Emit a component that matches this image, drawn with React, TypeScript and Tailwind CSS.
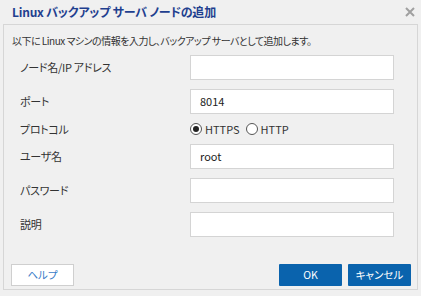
import React from 'react';

const jp = "font-['Noto_Sans_CJK_JP','Noto_Sans',sans-serif] [font-feature-settings:'palt']";

const Field: React.FC<{ label: string; value?: string }> = ({ label, value }) => (
  <div className="flex items-center h-[25px]">
    <div className="w-[170px] text-[11px] tracking-[-0.3px] text-[#333]">{label}</div>
    <div className="w-[204px] h-[25px] bg-white border border-[#d4d4d4] flex items-center px-[9px] text-[11px] text-[#222]">
      {value}
    </div>
  </div>
);

const Radio: React.FC<{ checked?: boolean; label: string }> = ({ checked, label }) => (
  <label className="flex items-center gap-[3px]">
    <span className="w-[12px] h-[12px] rounded-full border border-[#555] bg-white flex items-center justify-center">
      {checked && <span className="w-[6px] h-[6px] rounded-full bg-[#222]" />}
    </span>
    <span className="text-[11px] text-[#333]">{label}</span>
  </label>
);

export default function App() {
  return (
    <div className={`w-[421px] h-[296px] bg-[#f0f0f0] flex flex-col ${jp}`}>
      <div className="h-[24px] flex items-center justify-between pl-[12px] pr-[5px]">
        <h1 className="text-[12px] font-bold tracking-[-0.2px] text-[#1f3f8f] leading-none">Linux バックアップ サーバ ノードの追加</h1>
        <svg width="10" height="10" viewBox="0 0 10 10" className="mr-[1px]">
          <path d="M1 1 L9 9 M9 1 L1 9" stroke="#a0a0a0" strokeWidth="2" />
        </svg>
      </div>
      <div className="mx-[3px] h-[266px] border border-[#d6d6d6] flex flex-col">
        <p className="pt-[8px] pl-[8px] text-[10px] tracking-[-0.5px] leading-[16px] text-[#333]">
          以下に Linux マシンの情報を入力し、バックアップ サーバとして追加します。
        </p>
        <div className="mt-[6px] pl-[16px] flex flex-col">
          <Field label="ノード名/IP アドレス" />
          <div className="mt-[9px]">
            <Field label="ポート" value="8014" />
          </div>
          <div className="flex items-center h-[16px] my-[7px]">
            <div className="w-[170px] text-[11px] tracking-[-0.3px] text-[#333]">プロトコル</div>
            <div className="flex items-center gap-[6px]">
              <Radio checked label="HTTPS" />
              <Radio label="HTTP" />
            </div>
          </div>
          <Field label="ユーザ名" value="root" />
          <div className="mt-[9px]">
            <Field label="パスワード" />
          </div>
          <div className="mt-[9px]">
            <Field label="説明" />
          </div>
        </div>
        <div className="mt-auto mb-[3px] pl-[7px] pr-[6px] flex items-center justify-between">
          <button className="w-[63px] h-[22px] bg-white border border-[#cfcfcf] text-[10.5px] text-[#3a7cc8]">ヘルプ</button>
          <div className="flex gap-[6px]">
            <button className="w-[63px] h-[22px] bg-[#0a63ad] text-white text-[10.5px] rounded-[1px]">OK</button>
            <button className="w-[63px] h-[22px] bg-[#0a63ad] text-white text-[10.5px] rounded-[1px]">キャンセル</button>
          </div>
        </div>
      </div>
    </div>
  );
}
